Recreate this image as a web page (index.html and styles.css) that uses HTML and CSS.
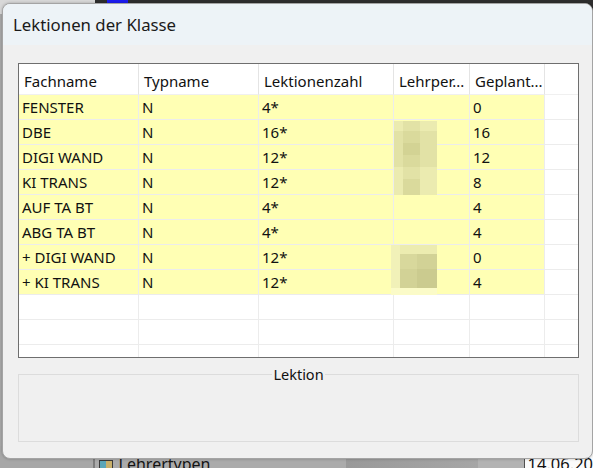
FILE: index.html
```html
<!DOCTYPE html>
<html>
<head>
<title>Lektionen der Klasse</title>
<link rel="stylesheet" href="styles.css">
</head>
<body>
<div class="desk">
  <div class="desk-top">
    <div class="top-left"></div>
    <div class="top-bar"><span class="top-icon"></span></div>
  </div>
  <div class="desk-middle"></div>
  <div class="desk-bottom">
    <div class="seg seg-a"></div>
    <div class="seg seg-b"><span class="tree-icon"></span><span class="tree-text">Lehrertypen</span></div>
    <div class="seg seg-c"></div>
    <div class="seg seg-d"></div>
    <div class="seg seg-e">14.06.20</div>
  </div>
</div>

<div class="dialog">
  <div class="titlebar">Lektionen der Klasse</div>
  <div class="content">
    <div class="grid">
      <div class="rows">
        <div class="hd">Fachname</div>
        <div class="hd">Typname</div>
        <div class="hd">Lektionenzahl</div>
        <div class="hd">Lehrper...</div>
        <div class="hd">Geplant...</div>
        <div class="hd last"></div>

        <div class="c hl">FENSTER</div><div class="c hl">N</div><div class="c hl">4*</div><div class="c hl"></div><div class="c hl">0</div><div class="c last"></div>
        <div class="c hl">DBE</div><div class="c hl">N</div><div class="c hl">16*</div><div class="c hl"></div><div class="c hl">16</div><div class="c last"></div>
        <div class="c hl">DIGI WAND</div><div class="c hl">N</div><div class="c hl">12*</div><div class="c hl"></div><div class="c hl">12</div><div class="c last"></div>
        <div class="c hl">KI TRANS</div><div class="c hl">N</div><div class="c hl">12*</div><div class="c hl"></div><div class="c hl">8</div><div class="c last"></div>
        <div class="c hl">AUF TA BT</div><div class="c hl">N</div><div class="c hl">4*</div><div class="c hl"></div><div class="c hl">4</div><div class="c last"></div>
        <div class="c hl">ABG TA BT</div><div class="c hl">N</div><div class="c hl">4*</div><div class="c hl"></div><div class="c hl">4</div><div class="c last"></div>
        <div class="c hl">+ DIGI WAND</div><div class="c hl">N</div><div class="c hl">12*</div><div class="c hl"></div><div class="c hl">0</div><div class="c last"></div>
        <div class="c hl">+ KI TRANS</div><div class="c hl">N</div><div class="c hl">12*</div><div class="c hl"></div><div class="c hl">4</div><div class="c last"></div>

        <div class="c"></div><div class="c"></div><div class="c"></div><div class="c"></div><div class="c"></div><div class="c last"></div>
        <div class="c"></div><div class="c"></div><div class="c"></div><div class="c"></div><div class="c"></div><div class="c last"></div>
        <div class="c"></div><div class="c"></div><div class="c"></div><div class="c"></div><div class="c"></div><div class="c last"></div>
      </div>

      <!-- pixelated teacher names -->
      <div class="mosaic m1">
        <i class="p1"></i><i class="p2"></i><i class="p1"></i>
        <i class="p2"></i><i class="p3"></i><i class="p2"></i>
        <i class="p2"></i><i class="p4"></i><i class="p2"></i>
        <i class="p2"></i><i class="p3"></i><i class="p2"></i>
        <i class="p1"></i><i class="p2"></i><i class="p1"></i>
        <i class="p1"></i><i class="p3"></i><i class="p1"></i>
      </div>
      <div class="mosaic m2">
        <i class="q0"></i><i class="q1"></i><i class="q1"></i>
        <i class="q0"></i><i class="q2"></i><i class="q3"></i>
        <i class="q0"></i><i class="q3"></i><i class="q4"></i>
        <i class="q5"></i><i class="q5"></i><i class="q5"></i>
      </div>
    </div>

    <fieldset class="groupbox"><legend>Lektion</legend></fieldset>
  </div>
</div>
</body>
</html>
```

FILE: styles.css
```css
body {
    margin: 0;
    width: 593px;
    height: 468px;
    overflow: hidden;
    position: relative;
    font-family: "Noto Sans", sans-serif;
}

/* desktop behind the dialog */
.desk {
    display: flex;
    flex-direction: column;
    height: 100%;
    background: #a9a9a9;
}

.desk-top {
    display: flex;
    height: 14px;
}

.top-left {
    width: 95px;
    background: #d8d8d8;
}

.top-bar {
    flex: 1;
    background: #2e2e2e;
    padding-left: 12px;
}

.top-icon {
    display: block;
    width: 21px;
    height: 8px;
    background: #1c1cf0;
    border-radius: 0 0 4px 4px;
}

.desk-middle {
    flex: 1;
}

.desk-bottom {
    display: flex;
    height: 22px;
}

.seg-a {
    width: 93px;
    background: #a7a7a7;
    border-right: 2px solid #7c7c7c;
}

.seg-b {
    width: 249px;
    background: #ababab;
    display: flex;
    align-items: flex-start;
    padding-left: 4px;
    padding-top: 8px;
    gap: 6px;
    font-size: 16px;
    color: #141414;
    line-height: 20px;
}

.tree-icon {
    width: 12px;
    height: 10px;
    margin-top: 6px;
    border: 1px solid #3a3a3a;
    background: linear-gradient(90deg, #5ba6b8 50%, #c9b06a 50%);
}

.seg-c {
    width: 132px;
    background: linear-gradient(90deg, #999 0%, #a6a6a6 100%);
}

.seg-d {
    width: 46px;
    background: #b3b3b3;
    border-right: 1px solid #505050;
}

.seg-e {
    flex: 1;
    background: #fbfbfb;
    font-size: 16.5px;
    line-height: 20px;
    padding-left: 3px;
    padding-top: 8px;
    color: #111;
}

/* dialog window */
.dialog {
    position: absolute;
    left: 2px;
    top: 3px;
    width: 589px;
    height: 454px;
    border: 1px solid #a4a4a4;
    border-radius: 8px;
    background: #f0f0f0;
    overflow: hidden;
    box-shadow: 0 0 3px rgba(0, 0, 0, 0.25);
}

.titlebar {
    height: 41px;
    background: #edf3f7;
    padding-left: 10px;
    font-size: 16.8px;
    line-height: 41px;
    color: #1a1a1a;
}

.content {
    padding: 18px 0 0 15px;
}

.grid {
    position: relative;
    width: 559px;
    height: 293px;
    border: 1px solid #6e6e6e;
    background: #fff;
    overflow: hidden;
}

.rows {
    display: grid;
    grid-template-columns: 120px 120px 135px 76px 75px 33px;
    grid-template-rows: 31px;
    grid-auto-rows: 25px;
    font-size: 15px;
    color: #111;
}

.hd {
    box-sizing: border-box;
    border-right: 1px solid #e4e4e4;
    border-bottom: 1px solid #f0f0f0;
    padding: 3px 0 0 5px;
    display: flex;
    align-items: center;
    white-space: nowrap;
    overflow: hidden;
}

.c {
    box-sizing: border-box;
    border-right: 1px solid #ececec;
    border-bottom: 1px solid #ececec;
    padding-left: 3px;
    display: flex;
    align-items: center;
    white-space: pre;
    overflow: hidden;
}

.hd.last,
.c.last {
    border-right: none;
}

.hl {
    background: #ffffb4;
}

.mosaic {
    position: absolute;
    display: grid;
}

.mosaic i {
    display: block;
}

.m1 {
    left: 375px;
    top: 57px;
    grid-template-columns: 9px 17px 17px;
    grid-template-rows: 10px 12px 12px 12px 12px 16px;
}

.p1 { background: #ebebb0; }
.p2 { background: #e2e2a6; }
.p3 { background: #dada9c; }
.p4 { background: #d3d394; }

.m2 {
    left: 372px;
    top: 181px;
    grid-template-columns: 9px 17px 20px;
    grid-template-rows: 9px 15px 19px 7px;
}

.q0 { background: #f1f1b8; }
.q1 { background: #ececb0; }
.q2 { background: #d8d89c; }
.q3 { background: #d2d296; }
.q4 { background: #cbcb8f; }
.q5 { background: #fbfbc8; }

/* group box below the grid */
.groupbox {
    margin: 8px 0 0 0;
    padding: 0;
    width: 561px;
    height: 76px;
    border: 1px solid #dcdcdc;
    box-sizing: border-box;
}

.groupbox legend {
    margin: 0 auto;
    padding: 0 1px;
    font-size: 14.5px;
    line-height: 16px;
    color: #111;
}
```
